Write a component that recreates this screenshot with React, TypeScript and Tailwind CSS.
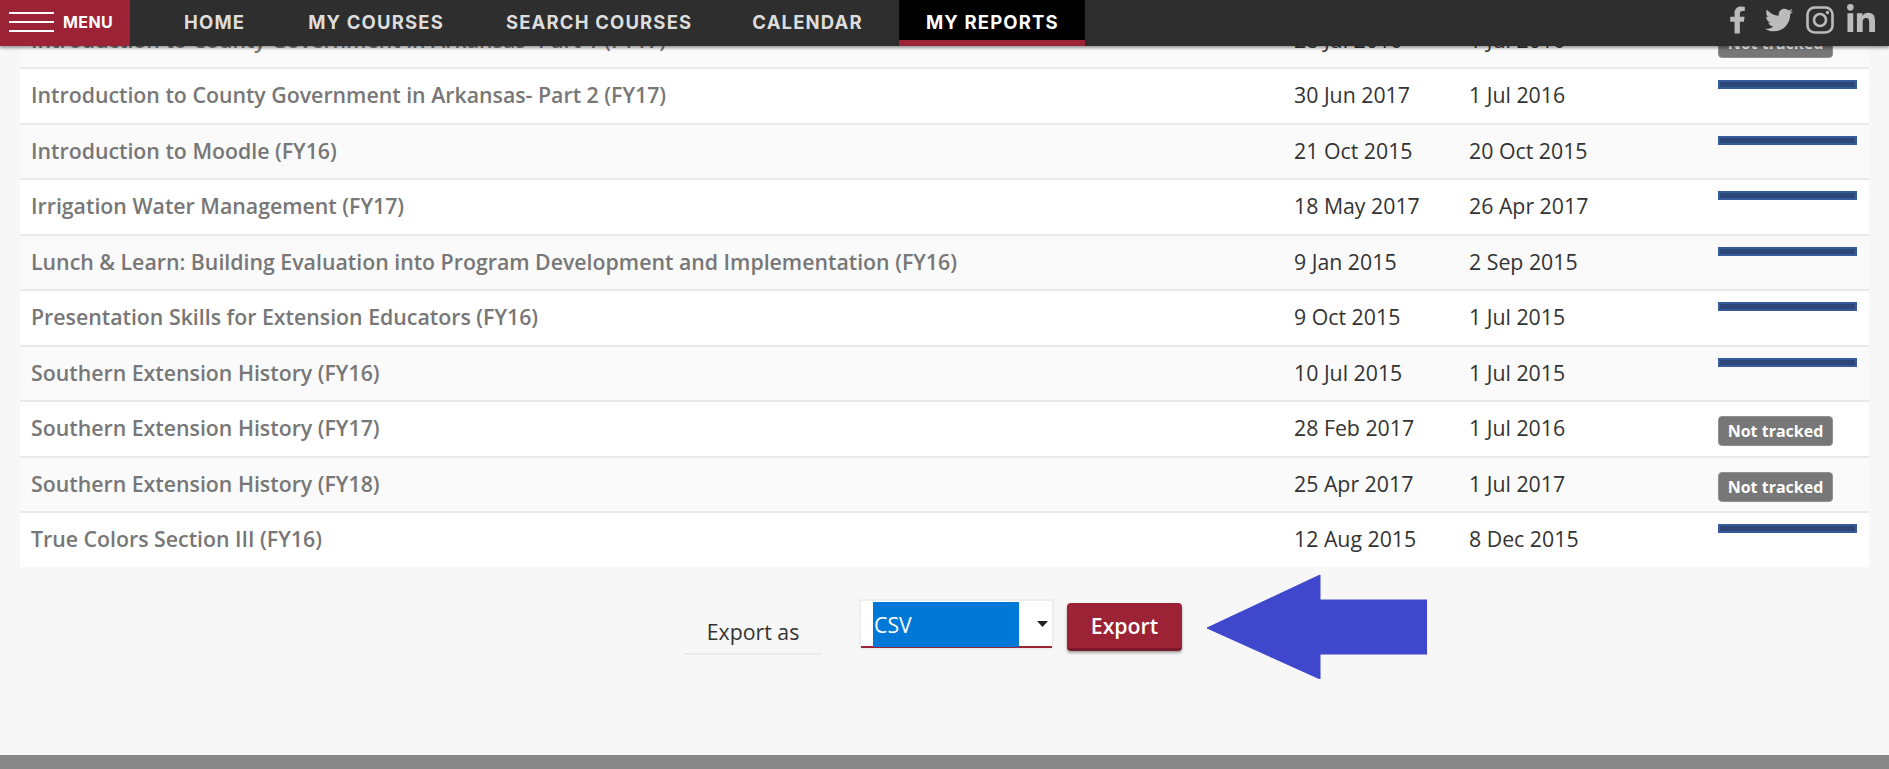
import { FaFacebookF, FaLinkedinIn, FaTwitter } from "react-icons/fa";

type Row = { name: string; end: string; start: string; tracked: boolean };

const ROWS: Row[] = [
  { name: "Introduction to County Government in Arkansas- Part 1 (FY17)", end: "28 Jul 2016", start: "1 Jul 2016", tracked: false },
  { name: "Introduction to County Government in Arkansas- Part 2 (FY17)", end: "30 Jun 2017", start: "1 Jul 2016", tracked: true },
  { name: "Introduction to Moodle (FY16)", end: "21 Oct 2015", start: "20 Oct 2015", tracked: true },
  { name: "Irrigation Water Management (FY17)", end: "18 May 2017", start: "26 Apr 2017", tracked: true },
  { name: "Lunch & Learn: Building Evaluation into Program Development and Implementation (FY16)", end: "9 Jan 2015", start: "2 Sep 2015", tracked: true },
  { name: "Presentation Skills for Extension Educators (FY16)", end: "9 Oct 2015", start: "1 Jul 2015", tracked: true },
  { name: "Southern Extension History (FY16)", end: "10 Jul 2015", start: "1 Jul 2015", tracked: true },
  { name: "Southern Extension History (FY17)", end: "28 Feb 2017", start: "1 Jul 2016", tracked: false },
  { name: "Southern Extension History (FY18)", end: "25 Apr 2017", start: "1 Jul 2017", tracked: false },
  { name: "True Colors Section III (FY16)", end: "12 Aug 2015", start: "8 Dec 2015", tracked: true },
];

const NAV = [
  { label: "HOME", className: "ml-[54px]" },
  { label: "MY COURSES", className: "ml-[63px]" },
  { label: "SEARCH COURSES", className: "ml-[62px]" },
  { label: "CALENDAR", className: "ml-[60px]" },
];

function Progress({ tracked }: { tracked: boolean }) {
  if (!tracked) {
    return (
      <span className="mt-[14px] flex h-[30px] w-[115px] items-center justify-center rounded-[4px] border border-[#919191] bg-[#777777] text-[16px] font-bold text-white">
        Not tracked
      </span>
    );
  }
  return <div className="mt-[11px] h-[9px] w-[139px] border-2 border-[#375a9a] bg-[#2c4678]" />;
}

export default function App() {
  return (
    <div className="relative h-[769px] overflow-hidden bg-[#f7f7f7] font-['Open_Sans',sans-serif]">
      <header className="absolute inset-x-0 top-0 z-10 flex h-[46px] items-stretch bg-[#2e2e2e] font-['Inter',sans-serif] shadow-[0_2px_3px_rgba(0,0,0,0.4)]">
        <div className="flex w-[130px] items-center bg-[#9c2236] pb-[2px] pl-[9px]">
          <div className="flex w-[45px] flex-col gap-[7px]">
            <span className="h-[2px] bg-white" />
            <span className="h-[2px] bg-white" />
            <span className="h-[2px] bg-white" />
          </div>
          <span className="ml-[9px] text-[16px] font-bold leading-none tracking-[0.4px] text-white">MENU</span>
        </div>
        {NAV.map((n) => (
          <a key={n.label} className={`${n.className} flex items-center text-[18.5px] font-bold tracking-[1.15px] text-[#dddddd]`}>
            {n.label}
          </a>
        ))}
        <a className="ml-[36.5px] flex w-[186px] items-center justify-center border-b-[6px] border-[#9c2236] bg-black pt-[6px] text-[18.5px] font-bold tracking-[1.15px] text-white">
          MY REPORTS
        </a>
        <div className="ml-auto flex items-center pb-[6px] pr-[14px] text-[#bbbbbb]">
          <FaFacebookF className="h-[28px] w-[17px]" />
          <FaTwitter className="ml-[19px] h-[28px] w-[28px]" />
          <svg className="ml-[13px] h-[28px] w-[28px]" viewBox="0 0 28 28" fill="none" stroke="currentColor" strokeWidth="2.6">
            <rect x="1.500" y="1.500" width="25" height="25" rx="7" />
            <circle cx="14" cy="14" r="6" />
            <circle cx="21.500" cy="6.500" r="1.700" fill="currentColor" stroke="none" />
          </svg>
          <FaLinkedinIn className="ml-[13px] h-[32px] w-[28px]" />
        </div>
      </header>

      <div className="px-5 pt-[13.5px]">
        {ROWS.map((r, i) => (
          <div
            key={r.name}
            className={`flex h-[55.5px] border-b-2 border-[#e9e9e9] last:h-[53.5px] last:border-b-0 ${i % 2 === 0 ? "bg-[#fafafa]" : "bg-white"}`}
          >
            <div className="flex w-[1274px] items-center pb-[1px] pl-[11px] text-[21.3px] font-semibold text-[#777777]">{r.name}</div>
            <div className="flex w-[175px] items-center pb-[1px] text-[21.3px] text-[#333333]">{r.end}</div>
            <div className="flex w-[249px] items-center pb-[1px] text-[21.3px] text-[#333333]">{r.start}</div>
            <Progress tracked={r.tracked} />
          </div>
        ))}
      </div>

      <div className="mt-[32.5px] flex items-start pl-[684px]">
        <div className="mt-[17px] flex h-[39px] w-[138px] items-start justify-center border-b-2 border-[#ebebeb] text-[21.3px] text-[#333333]">
          Export as
        </div>
        <div className="relative ml-[37px] h-[51px] w-[195px] border-2 border-[#eeeeee] bg-white">
          <div className="absolute inset-x-0 bottom-0 h-[2px] bg-[#9c2236]" />
          <div className="absolute bottom-px left-[12px] top-px flex w-[146px] items-center bg-[#0078d7] pl-[1px] text-[21.3px] text-white">
            CSV
          </div>
          <svg className="absolute left-[176px] top-[20px]" width="11" height="6" viewBox="0 0 11 6">
            <path d="M0 0h11L5.500 6z" fill="#222222" />
          </svg>
        </div>
        <button className="ml-[13px] mt-[3.500px] h-[48px] w-[115px] rounded-[4px] border-b-[3px] border-[#7a1a2b] bg-[#9c2236] pt-[2px] text-[21.3px] font-semibold text-white shadow-[0_2px_3px_rgba(0,0,0,0.35)]">
          Export
        </button>
        <svg className="ml-[25px] -mt-[24px]" width="220" height="104" viewBox="0 0 220 104">
          <path d="M0 53 113 0v25h107v54H113v25z" fill="#3f48cc" stroke="#3f48cc" strokeWidth="1" strokeLinejoin="round" />
        </svg>
      </div>

      <div className="absolute inset-x-0 bottom-0 h-[14px] bg-[#888888]" />
    </div>
  );
}
